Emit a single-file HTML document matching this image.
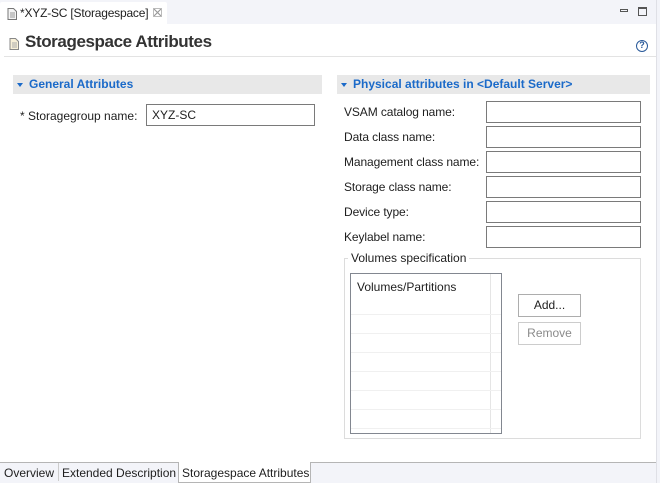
<!DOCTYPE html>
<html><head><style>
*{box-sizing:border-box;margin:0;padding:0}
body{width:660px;height:483px;overflow:hidden;background:#f3f4f9;font-family:"Liberation Sans",sans-serif;font-size:12px;color:#1e1e1e;position:relative}
.a{position:absolute}
.inp{position:absolute;border:1px solid #7a7a7a;background:#fff;height:22px;padding:3px 5px;font-size:12px}
.sec{position:absolute;background:#e8e8e8;height:19px;color:#1b6ac9;font-weight:bold;font-size:12px;padding:2px 0 0 16px}
.sec:before{content:"";position:absolute;left:4px;top:8px;border-left:3px solid transparent;border-right:3px solid transparent;border-top:4px solid #1b6ac9}
.lbl{position:absolute;left:344px;letter-spacing:-0.1px}
.btn{position:absolute;border:1px solid #adadad;background:#fff;text-align:center;font-size:12px;padding-top:3px}
</style></head><body>
<div class="a" style="left:0;top:2px;width:167px;height:23px;background:#fff;border-radius:2px 2px 0 0"></div>
<svg class="a" style="left:7px;top:8px" width="10" height="12"><path d="M1 .5h5.5l3 3V11.5H1z" fill="#f4f4f4" stroke="#777"/><path d="M3 5h5M3 7h5M3 9h5" stroke="#999"/></svg>
<div class="a" style="left:20px;top:6px;letter-spacing:-0.2px">*XYZ-SC [Storagespace]</div>
<svg class="a" style="left:153px;top:8px" width="9" height="9"><path d="M1 1l7 7M8 1l-7 7" stroke="#999" stroke-width="1.2"/><rect x=".5" y=".5" width="8" height="8" fill="none" stroke="#bbb"/></svg>
<div class="a" style="left:620px;top:9px;width:8px;height:3px;border:1px solid #555"></div>
<div class="a" style="left:638px;top:7px;width:9px;height:9px;border:1px solid #555;border-top-width:2px"></div>
<div class="a" style="left:0;top:24px;width:656px;height:439px;background:#fff"></div>
<div class="a" style="left:656px;top:0;width:1px;height:483px;background:#dfe0e6"></div>
<svg class="a" style="left:9px;top:38px" width="10" height="12"><path d="M1 .5h5.5l3 3V11.5H1z" fill="#f8f0d8" stroke="#888"/><path d="M3 5h5M3 7h5M3 9h5" stroke="#aaa"/></svg>
<div class="a" style="left:25px;top:32px;font-size:17px;font-weight:bold;color:#333;letter-spacing:-0.4px">Storagespace Attributes</div>
<div class="a" style="left:636px;top:40px;width:12px;height:12px;border:1.5px solid #2a5a9a;border-radius:50%;font-size:9px;font-weight:bold;color:#2a5a9a;text-align:center;line-height:9px">?</div>
<div class="a" style="left:4px;top:56px;width:652px;height:1px;background:#e3e3e3"></div>
<div class="sec" style="left:13px;top:75px;width:309px">General Attributes</div>
<div class="sec" style="left:337px;top:75px;width:313px">Physical attributes in &lt;Default Server&gt;</div>
<div class="a" style="left:20px;top:109px">* Storagegroup name:</div>
<div class="inp" style="left:146px;top:104px;width:169px">XYZ-SC</div>
<div class="lbl" style="top:105px">VSAM catalog name:</div>
<div class="lbl" style="top:130px">Data class name:</div>
<div class="lbl" style="top:155px">Management class name:</div>
<div class="lbl" style="top:180px">Storage class name:</div>
<div class="lbl" style="top:205px">Device type:</div>
<div class="lbl" style="top:230px">Keylabel name:</div>
<div class="inp" style="left:486px;top:101px;width:155px"></div>
<div class="inp" style="left:486px;top:126px;width:155px"></div>
<div class="inp" style="left:486px;top:151px;width:155px"></div>
<div class="inp" style="left:486px;top:176px;width:155px"></div>
<div class="inp" style="left:486px;top:201px;width:155px"></div>
<div class="inp" style="left:486px;top:226px;width:155px"></div>
<div class="a" style="left:344px;top:258px;width:297px;height:181px;border:1px solid #dcdcdc"></div>
<div class="a" style="left:348px;top:251px;background:#fff;padding:0 3px">Volumes specification</div>
<div class="a" style="left:350px;top:273px;width:152px;height:161px;border:1px solid #828790;background:#fff;overflow:hidden">
<div class="a" style="left:6px;top:6px">Volumes/Partitions</div>
<div class="a" style="left:139px;top:0;width:1px;height:160px;background:#e5e5e5"></div>
<div class="a" style="left:0;top:40px;width:150px;border-top:1px solid #f0f0f0"></div>
<div class="a" style="left:0;top:59px;width:150px;border-top:1px solid #f0f0f0"></div>
<div class="a" style="left:0;top:78px;width:150px;border-top:1px solid #f0f0f0"></div>
<div class="a" style="left:0;top:97px;width:150px;border-top:1px solid #f0f0f0"></div>
<div class="a" style="left:0;top:116px;width:150px;border-top:1px solid #f0f0f0"></div>
<div class="a" style="left:0;top:135px;width:150px;border-top:1px solid #f0f0f0"></div>
<div class="a" style="left:0;top:154px;width:150px;border-top:1px solid #f0f0f0"></div>
</div>
<div class="btn" style="left:518px;top:294px;width:63px;height:23px">Add...</div>
<div class="btn" style="left:518px;top:322px;width:63px;height:23px;border-color:#ccc;color:#8a8a8a">Remove</div>
<div class="a" style="left:0;top:462px;width:656px;height:1px;background:#b5b5b5"></div>
<div class="a" style="left:4px;top:466px">Overview</div>
<div class="a" style="left:58px;top:463px;width:1px;height:18px;background:#ccc"></div>
<div class="a" style="left:62px;top:466px">Extended Description</div>
<div class="a" style="left:178px;top:462px;width:133px;height:21px;background:#fff;border:1px solid #b5b5b5;border-top:none"></div>
<div class="a" style="left:182px;top:466px">Storagespace Attributes</div>
</body></html>
